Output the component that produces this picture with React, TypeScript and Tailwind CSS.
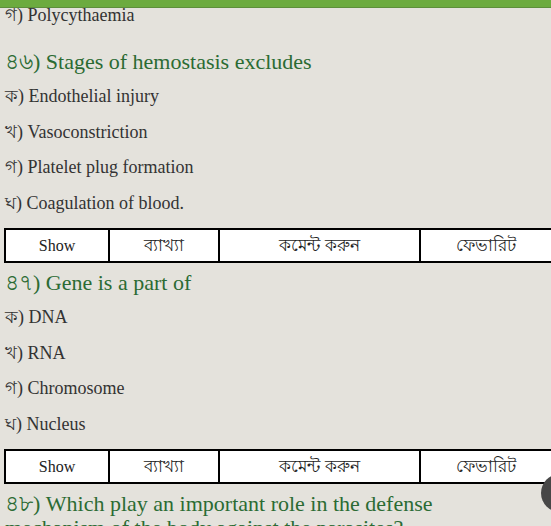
import React from 'react'

type Question = {
  no: string
  title: string
  options: string[]
}

const QUESTIONS: Question[] = [
  {
    no: '৪৬',
    title: 'Stages of hemostasis excludes',
    options: [
      'ক) Endothelial injury',
      'খ) Vasoconstriction',
      'গ) Platelet plug formation',
      'ঘ) Coagulation of blood.',
    ],
  },
  {
    no: '৪৭',
    title: 'Gene is a part of',
    options: ['ক) DNA', 'খ) RNA', 'গ) Chromosome', 'ঘ) Nucleus'],
  },
]

/* Action row under each question */
function ActionTable() {
  return (
    <table className="ml-[4px] mt-[7px] w-[549px] border-collapse border-2 border-black bg-white text-[17px] text-[#222]">
      <tbody>
        <tr className="h-[33px]">
          <td className="w-[104px] border-2 border-black text-center text-[16px]">Show</td>
          <td className="w-[110px] border-2 border-black text-center">ব্যাখ্যা</td>
          <td className="w-[201px] border-2 border-black text-center">কমেন্ট করুন</td>
          <td className="border-2 border-black text-center">ফেভারিট</td>
        </tr>
      </tbody>
    </table>
  )
}

function Option({ text }: { text: string }) {
  return <p className="px-[5px] py-[7px] text-[18px] leading-[21.5px] text-[#333]">{text}</p>
}

export default function App() {
  return (
    <div className="relative h-[526px] w-[551px] overflow-hidden bg-[#e4e2dc] font-['Liberation_Serif','Tinos','DejaVu_Serif',serif]">
      {/* top bar */}
      <div className="absolute left-0 right-0 top-0 z-10 h-[8px] border-b border-[#5d8f3b] bg-[#6cab3f]" />

      <div className="flex flex-col">
        <p className="px-[5px] pt-[4px] text-[18px] leading-[22px] text-[#333]">গ) Polycythaemia</p>

        {QUESTIONS.map((q, i) => (
          <div key={q.no} className={i === 0 ? 'mt-[24px]' : 'mt-[8px]'}>
            <h2 className="mb-[5px] px-[5px] text-[22px] leading-[24px] text-[#2b6b33]">
              {q.no}) {q.title}
            </h2>
            {q.options.map((o) => (
              <Option key={o} text={o} />
            ))}
            <ActionTable />
          </div>
        ))}

        <h2 className="mt-[8px] w-[470px] px-[5px] text-[22px] leading-[24px] text-[#2b6b33]">
          ৪৮) Which play an important role in the defense mechanism of the body against the parasites?
        </h2>
      </div>

      {/* scroll-to-top button */}
      <div className="absolute left-[541px] top-[474px] h-[38px] w-[38px] rounded-full bg-[#474747]" />
    </div>
  )
}
